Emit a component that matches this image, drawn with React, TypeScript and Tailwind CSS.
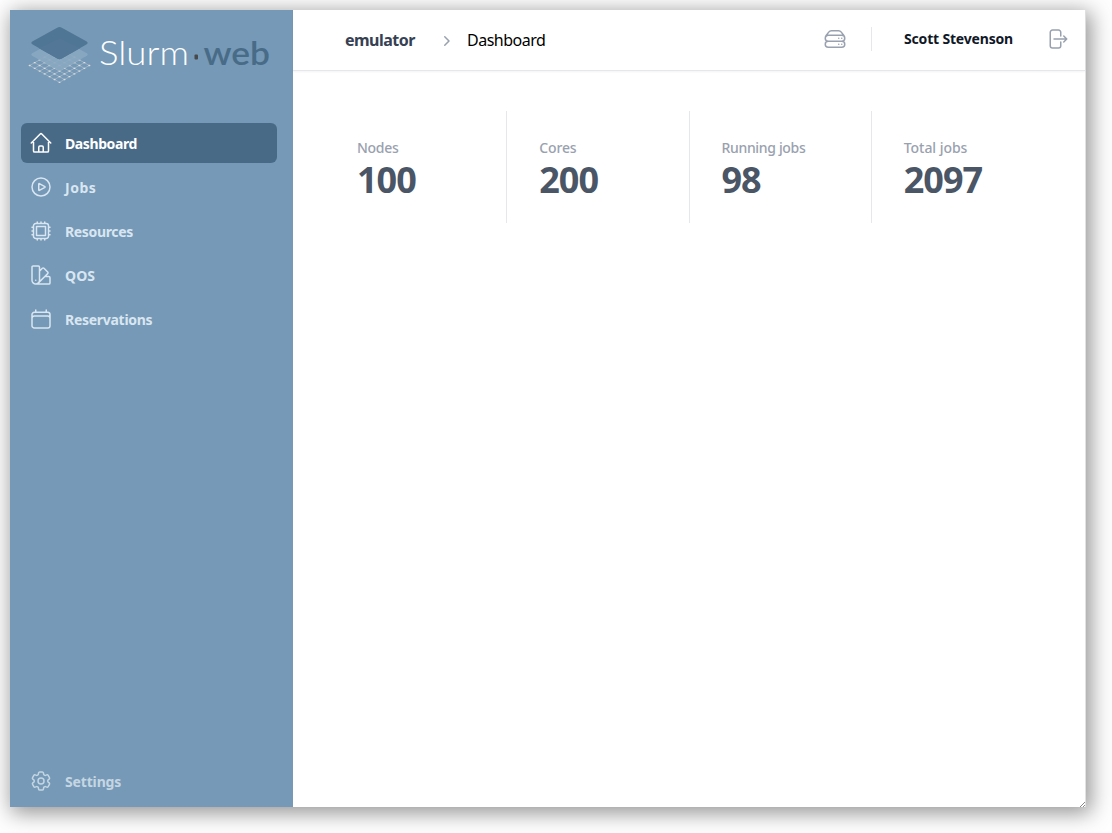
import {
  HiOutlineHome,
  HiOutlinePlayCircle,
  HiOutlineCpuChip,
  HiOutlineSwatch,
  HiOutlineCalendar,
  HiOutlineCog6Tooth,
  HiOutlineServerStack,
  HiOutlineArrowRightOnRectangle,
  HiMiniChevronRight,
} from 'react-icons/hi2';

const nav = [
  { name: 'Dashboard', icon: HiOutlineHome, active: true, tracking: 'tracking-[-0.4px]' },
  { name: 'Jobs', icon: HiOutlinePlayCircle, active: false, tracking: 'tracking-[0.5px]' },
  { name: 'Resources', icon: HiOutlineCpuChip, active: false, tracking: 'tracking-[-0.35px]' },
  { name: 'QOS', icon: HiOutlineSwatch, active: false, tracking: 'tracking-[0.1px]' },
  { name: 'Reservations', icon: HiOutlineCalendar, active: false, tracking: 'tracking-[-0.28px]' },
];

const stats = [
  { name: 'Nodes', value: '100', tracking: 'tracking-[-0.3px]' },
  { name: 'Cores', value: '200', tracking: 'tracking-[-0.15px]' },
  { name: 'Running jobs', value: '98', tracking: 'tracking-[-0.33px]' },
  { name: 'Total jobs', value: '2097', tracking: 'tracking-[-0.05px]' },
];

function Logo() {
  const lines = [0, 1, 2, 3, 4, 5, 6];
  return (
    <svg className="block h-[70px] w-[250px]" viewBox="25 20 250 70" aria-label="Slurm-web">
      <g stroke="#c3ccd4" strokeWidth="0.7" opacity="0.7">
        {lines.map((i) => (
          <g key={i}>
            <path d={`M${29.7 + i * 4.97} ${65.5 - i * 2.8}l29.800 16.800`} />
            <path d={`M${89.3 - i * 4.97} ${65.5 - i * 2.8}l-29.800 16.800`} />
          </g>
        ))}
      </g>
      <g stroke="#dededc" strokeWidth="1.300" strokeLinecap="round">
        {lines.map((i) =>
          lines.map((j) => (
            <path key={`${i}-${j}`} d={`M${29.3 + (i + j) * 4.97} ${65.5 + (i - j) * 2.8}h0.8`} />
          )),
        )}
      </g>
      <path d="M61.500 39.600L86.500 53Q89 54.500 86.500 56L61.500 70Q59.500 71 57.500 70L32.500 56Q30 54.500 32.500 53L57.500 39.600Z" fill="#8aa8c1" opacity="0.9" />
      <path d="M61.800 27.700L86.300 41.200Q89 42.900 86.300 44.600L61.800 58.500Q59.500 59.800 57.200 58.500L32.700 44.600Q30 42.900 32.700 41.200L57.200 27.700Q59.500 26.400 61.800 27.700Z" fill="#507695" />
      <path d="M59.500 38.500L80 48.200L61.800 58.500Q59.500 59.800 57.200 58.500L39 48.200Z" fill="#537897" />
      <text x="99" y="65" textLength="90" lengthAdjust="spacingAndGlyphs" fill="#fff" className="font-['Lato',sans-serif] text-[33px] font-light">Slurm</text>
      <rect x="194.500" y="54.500" width="3.500" height="5" rx="1" fill="#48494b" />
      <text x="203.500" y="65" textLength="66.500" lengthAdjust="spacingAndGlyphs" fill="#486b88" className="font-['Lato',sans-serif] text-[33px] font-semibold">web</text>
    </svg>
  );
}

export default function App() {
  return (
    <div className="h-[833px] w-[1112px] overflow-hidden bg-[#fefefe] pt-[10px] pl-[10px] font-['Noto_Sans','Open_Sans',sans-serif]">
      <div className="flex h-[797px] w-[1076px] bg-white shadow-[3px_4px_20px_2px_rgba(0,0,0,0.42)]">
        <aside className="flex w-[283px] shrink-0 flex-col bg-[#7599b6] pr-4 pb-[6px] pl-[11px]">
          <div className="-mr-4 h-[113px] pt-[10px] pl-1">
            <Logo />
          </div>
          <nav className="flex flex-1 flex-col gap-1">
            {nav.map(({ name, icon: Icon, active, tracking }) => (
              <a
                key={name}
                className={`flex h-10 items-center gap-3 rounded-md px-2 text-sm leading-6 font-bold ${tracking} ${active ? 'bg-[#486a86] text-white' : 'text-[#d9e6f1]'}`}
              >
                <Icon className="size-6 shrink-0" />
                <span className="pt-[2px]">{name}</span>
              </a>
            ))}
            <a className="mt-auto flex h-10 items-center gap-3 px-2 text-sm leading-6 font-bold tracking-[-0.15px] text-[#c5d6e3]">
              <HiOutlineCog6Tooth className="size-6 shrink-0" />
              <span className="pt-[2px]">Settings</span>
            </a>
          </nav>
        </aside>
        <div className="flex min-w-0 flex-1 flex-col border-r border-[#e2e2e2]">
          <header className="flex h-[61px] items-center border-b border-gray-200 pr-4 pb-[2px] pl-[52px] shadow-[0_1px_2px_rgba(0,0,0,0.05)]">
            <span className="w-[91px] pt-[2px] text-base font-bold tracking-[-0.52px] text-gray-700">emulator</span>
            <HiMiniChevronRight className="mt-[3px] size-5 shrink-0 text-gray-400" />
            <span className="ml-[11px] pt-[2px] text-base tracking-[-0.5px] text-black">Dashboard</span>
            <div className="ml-auto flex items-center">
              <HiOutlineServerStack className="size-6 text-gray-400" />
              <div className="ml-6 h-6 w-px bg-gray-200" />
              <span className="ml-8 w-[141px] text-sm leading-6 font-bold tracking-[-0.18px] text-gray-900">Scott Stevenson</span>
              <HiOutlineArrowRightOnRectangle className="size-6 text-gray-400" />
            </div>
          </header>
          <main className="relative flex-1 pt-10 pl-[31px]">
            <div className="grid w-[729px] grid-cols-4">
              {stats.map((s, i) => (
                <div key={s.name} className={`h-28 pt-[25px] ${i ? 'border-l border-gray-200 pl-8' : 'pl-[33px]'}`}>
                  <p className={`text-sm leading-6 font-medium text-gray-400 ${s.tracking}`}>{s.name}</p>
                  <p className="text-4xl font-bold tracking-[-1px] text-gray-600">{s.value}</p>
                </div>
              ))}
            </div>
            <svg className="absolute right-0 bottom-0 size-[5px]" viewBox="0 0 5 5" stroke="#888" strokeWidth="1">
              <path d="M0 5L5 0M3 5L5 3" />
            </svg>
          </main>
        </div>
      </div>
    </div>
  );
}
